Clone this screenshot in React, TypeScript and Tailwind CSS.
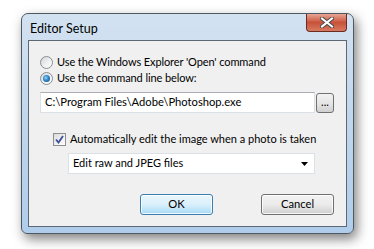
import { useState } from "react";

const font = { fontFamily: 'Lato, "Noto Sans", sans-serif' };

function Radio({ checked, label }: { checked: boolean; label: string }) {
  return (
    <div className="flex items-center h-[16px]">
      <span className="w-[13px] h-[13px] rounded-full border border-[#8a8f96] bg-gradient-to-br from-[#d2d4d8] via-[#eceef0] to-white flex items-center justify-center">
        {checked && (
          <span className="w-[7px] h-[7px] rounded-full bg-[radial-gradient(circle_at_40%_40%,#8fd3ff_0%,#2f86c8_45%,#123f6e_100%)]" />
        )}
      </span>
      <span className="ml-[4px] text-[11px] tracking-[-0.1px] text-black whitespace-nowrap">{label}</span>
    </div>
  );
}

export default function App() {
  const [mode, setMode] = useState("cmd");
  const [auto, setAuto] = useState(true);

  return (
    <div className="w-[374px] h-[249px] bg-white overflow-hidden" style={font}>
      <div className="ml-[21px] mt-[13px] w-[333px] h-[221px] rounded-t-[7px] rounded-b-[6px] border border-[#4f5761] bg-gradient-to-b from-[#d3e2f1] via-[#c0d6ed] to-[#afcdeb] shadow-[3px_5px_12px_rgba(0,0,0,0.5)] px-[6px] pb-[6px] flex flex-col">
        {/* title bar */}
        <div className="h-[26px] flex items-start justify-between shrink-0">
          <span className="mt-[6px] ml-[2px] text-[12.5px] text-black whitespace-nowrap">Editor Setup</span>
          <button className="w-[41px] h-[18px] rounded-b-[4px] border border-t-0 border-[#6b2b21] bg-gradient-to-b from-[#e8a596] via-[#c8513a] to-[#d77a60] flex items-center justify-center">
            <svg width="14" height="11" viewBox="0 0 14 11">
              <path d="M2 1.5 L12 9.5 M12 1.5 L2 9.5" stroke="#4a4a4a" strokeWidth="4" strokeLinecap="square" />
              <path d="M2 1.5 L12 9.5 M12 1.5 L2 9.5" stroke="#ffffff" strokeWidth="2" strokeLinecap="square" />
            </svg>
          </button>
        </div>

        {/* client area */}
        <div className="flex-1 border border-[#5d6875] bg-[#f0f0f0] pl-[11px] pt-[13px] flex flex-col">
          <div onClick={() => setMode("explorer")}>
            <Radio checked={mode === "explorer"} label="Use the Windows Explorer 'Open' command" />
          </div>
          <div onClick={() => setMode("cmd")}>
            <Radio checked={mode === "cmd"} label="Use the command line below:" />
          </div>

          <div className="mt-[6px] flex items-center">
            <div className="w-[275px] h-[21px] bg-white border border-[#dbdfe6] border-t-[#abadb3] flex items-center pl-[4px] text-[11.2px] text-black whitespace-nowrap">
              C:\Program Files\Adobe\Photoshop.exe
            </div>
            <button className="ml-[1px] w-[18px] h-[20px] rounded-[3px] border border-[#707070] bg-gradient-to-b from-[#f2f2f2] via-[#e6e6e6] to-[#d0d0d0] text-[11px] leading-none text-black flex items-end justify-center pb-[5px]">
              ...
            </button>
          </div>

          <div className="mt-[18px] ml-[13px] flex items-center h-[16px]" onClick={() => setAuto(!auto)}>
            <span className="w-[13px] h-[13px] border border-[#8e8f8f] bg-gradient-to-br from-[#dcdcdc] to-white flex items-center justify-center">
              {auto && (
                <svg width="9" height="9" viewBox="0 0 9 9">
                  <path d="M1 4.5 L3.5 7.5 L8 1" fill="none" stroke="#3b4f9a" strokeWidth="1.8" />
                </svg>
              )}
            </span>
            <span className="ml-[4px] text-[11px] text-black whitespace-nowrap">Automatically edit the image when a photo is taken</span>
          </div>

          <div className="mt-[6px] ml-[28px] w-[247px] h-[21px] bg-white border border-[#dbdfe6] flex items-center justify-between pl-[4px] pr-[6px] text-[11px] text-black">
            <span>Edit raw and JPEG files</span>
            <svg width="7" height="4" viewBox="0 0 7 4">
              <path d="M0 0 H7 L3.5 4 Z" fill="#000" />
            </svg>
          </div>

          <div className="mt-[20px] flex">
            <button className="ml-[100px] w-[73px] h-[21px] rounded-[3px] border border-[#3c7fb1] bg-gradient-to-b from-[#eaf6fd] via-[#d9f0fc] to-[#a7d9f5] shadow-[inset_0_0_0_1px_rgba(255,255,255,0.8)] text-[11.2px] text-black">
              OK
            </button>
            <button className="ml-[48px] w-[73px] h-[21px] rounded-[3px] border border-[#707070] bg-gradient-to-b from-[#f2f2f2] via-[#ebebeb] to-[#cfcfcf] shadow-[inset_0_0_0_1px_rgba(255,255,255,0.8)] text-[11.2px] text-black">
              Cancel
            </button>
          </div>
        </div>
      </div>
    </div>
  );
}
